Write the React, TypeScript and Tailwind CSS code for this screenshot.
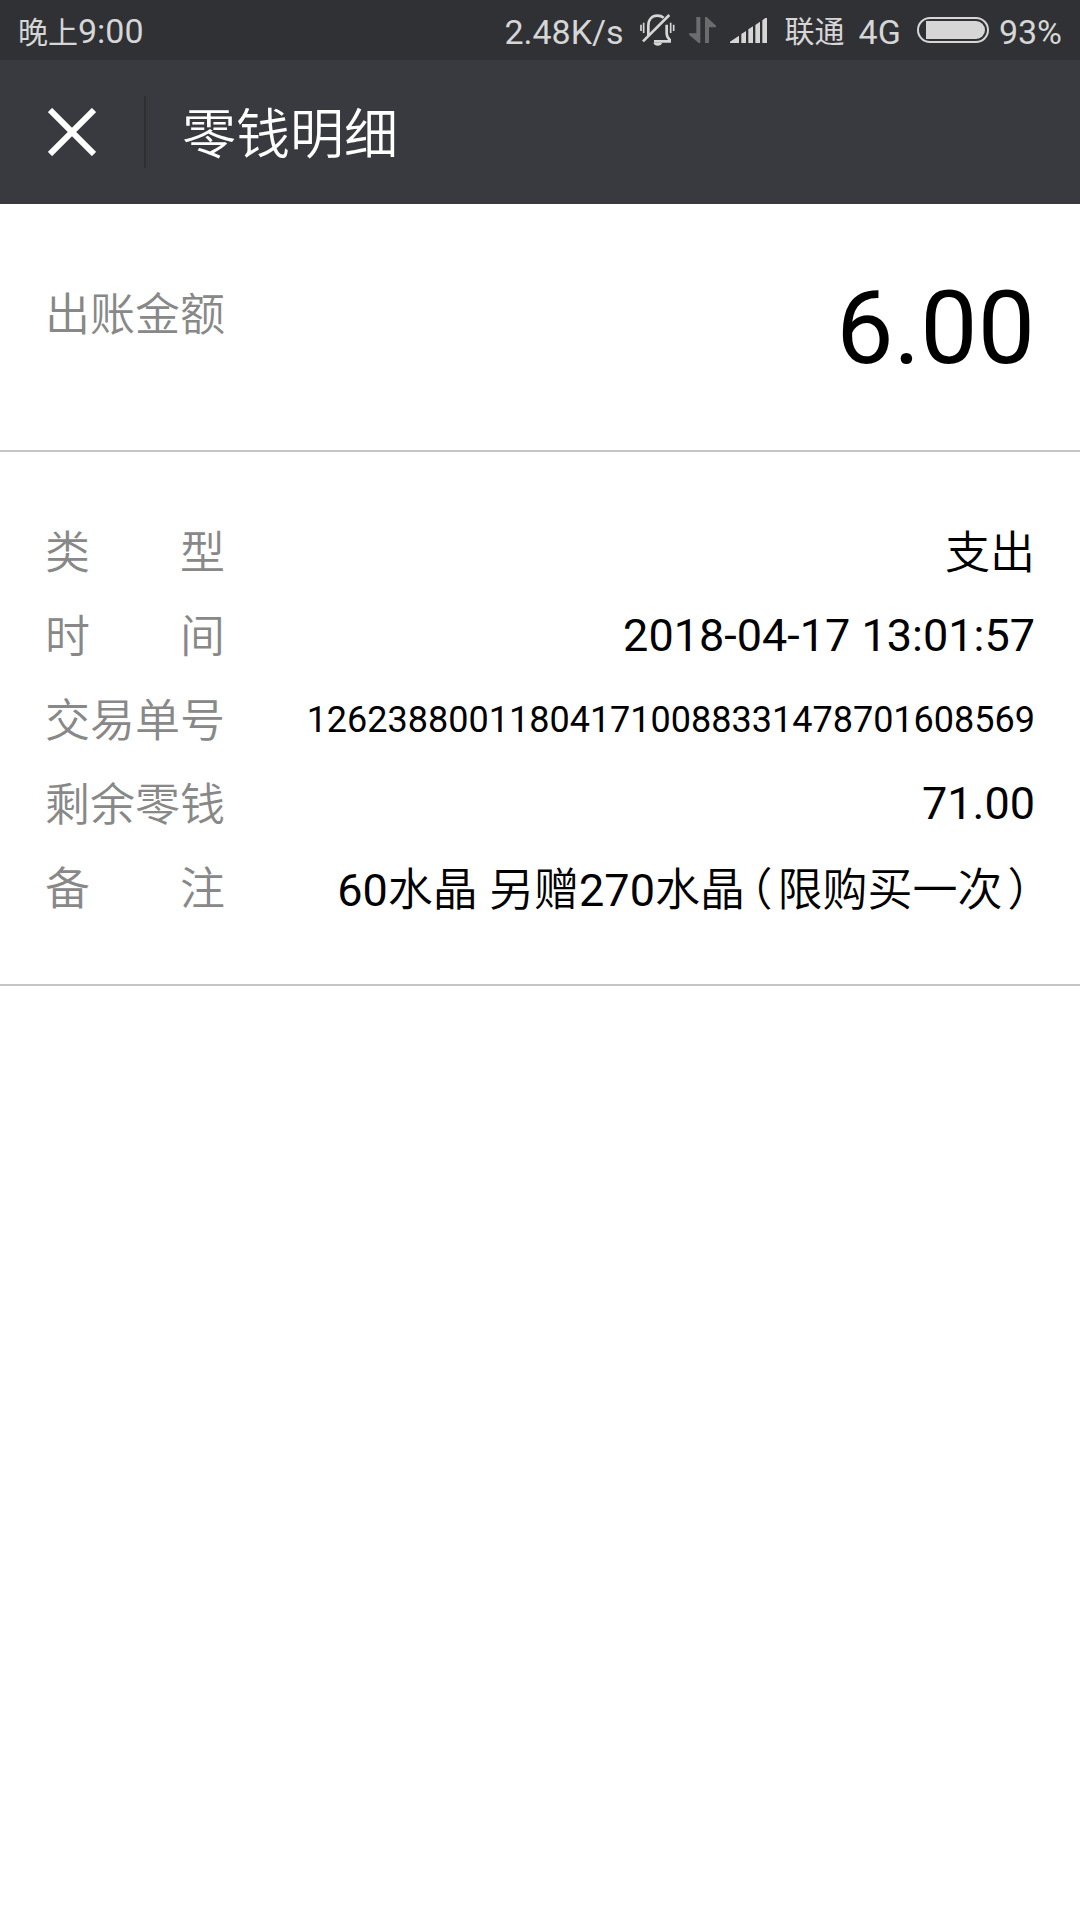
import type { ReactNode } from 'react';

type Row = {
  label: string;
  value: ReactNode;
  valueClass?: string;
};

const rows: Row[] = [
  { label: '类型', value: <Hanzi>支出</Hanzi>, valueClass: 'pt-1' },
  { label: '时间', value: '2018-04-17 13:01:57' },
  { label: '交易单号', value: '126238800118041710088331478701608569', valueClass: 'text-[36px]' },
  { label: '剩余零钱', value: '71.00' },
  { label: '备注', value: <Note />, valueClass: 'pt-[6px]' },
];

function Hanzi({ children }: { children: ReactNode }) {
  return <span className="font-[350]">{children}</span>;
}

// half-width alternates keep the brackets close to the words
function Bracket({ children }: { children: ReactNode }) {
  return <span className="mx-[5px] font-[350] [font-feature-settings:'halt']">{children}</span>;
}

function Note() {
  return (
    <>
      60<Hanzi>水晶</Hanzi> <Hanzi>另赠</Hanzi>270<Hanzi>水晶</Hanzi>
      <Bracket>（</Bracket>
      <Hanzi>限购买一次</Hanzi>
      <Bracket>）</Bracket>
    </>
  );
}

function MutedBellIcon() {
  return (
    <svg viewBox="0 0 105 96" className="h-8 w-[35px]" fill="none" stroke="currentColor" strokeWidth="8" aria-hidden="true">
      <path d="M25 66V35C25 16 36 5 52 5c8 0 14 2 19 6" />
      <path d="M80 32v26c0 9 3 14 9 19v5H42" />
      <path d="M9 82 88 3" />
      <path d="M3 32v19M11 26v31M92 26v31M101 32v19" strokeWidth="5" />
      <path d="M40 86h27c-2 6-7 9-13.500 9S42 92 40 86z" fill="currentColor" stroke="none" />
    </svg>
  );
}

function DataArrowsIcon() {
  return (
    <svg viewBox="0 0 81 78" className="h-[26px] w-[27px] text-[#6b6c6e]" fill="currentColor" aria-hidden="true">
      <path d="M22 0h12v78h-5L0 53v-4h22z" />
      <path d="M48 0h5l28 26v5H60v47H48z" />
    </svg>
  );
}

function SignalIcon() {
  return (
    <svg viewBox="0 0 111 75" className="h-[25px] w-[37px]" fill="currentColor" aria-hidden="true">
      <path d="M0 75v-4l27-18v22zM34 75V48l14-9v36zM55 75V34l14-9v50zM76 75V21l14-10v64zM97 75V7l9-7h5v75z" />
    </svg>
  );
}

function BatteryIcon() {
  return (
    <svg viewBox="0 0 72 26" className="h-[26px] w-[72px]" aria-hidden="true">
      <rect x="1" y="1" width="70" height="24" rx="12" fill="none" stroke="currentColor" strokeWidth="2" />
      <path d="M9 4h50a9 9 0 0 1 0 18H9z" fill="currentColor" />
    </svg>
  );
}

function StatusBar() {
  return (
    <div className="flex h-[60px] items-center justify-between bg-[#303135] px-[18px] text-[34px] leading-[48px] text-[#d6d6d6]">
      <span className="pt-1"><span className="text-[30px]">晚上</span>9:00</span>
      <div className="flex items-center">
        <span className="pt-1">2.48K/s</span>
        <span className="ml-4"><MutedBellIcon /></span>
        <span className="ml-[14px]"><DataArrowsIcon /></span>
        <span className="ml-[14px]"><SignalIcon /></span>
        <span className="ml-[18px] pt-1 text-[30px]">联通</span>
        <span className="ml-[14px] pt-1">4G</span>
        <span className="ml-4"><BatteryIcon /></span>
        <span className="ml-[10px] pt-1">93%</span>
      </div>
    </div>
  );
}

export default function App() {
  return (
    <div className="min-h-screen bg-white font-['Roboto','Noto_Sans_CJK_SC',sans-serif] text-black">
      <StatusBar />

      <header className="flex h-36 items-center bg-[#393a3f] text-white">
        <button type="button" aria-label="关闭" className="flex h-[72px] w-36 items-center justify-center">
          <svg viewBox="0 0 48 48" className="size-12" stroke="currentColor" strokeWidth="6" aria-hidden="true">
            <path d="M2 2l44 44M46 2L2 46" />
          </svg>
        </button>
        <div className="h-[72px] w-[2px] bg-[#2e2f33]" />
        <h1 className="ml-9 pt-2 text-[54px] leading-[72px] font-[350]">零钱明细</h1>
      </header>

      <main>
        <dl className="flex items-start justify-between border-b-2 border-[#c6c6c6] px-[45px] pt-[65px] pb-[63px] text-[45px]">
          <dt className="leading-[94px] font-[350] text-[#888]">出账金额</dt>
          <dd className="text-[102px] leading-[118px]">6.00</dd>
        </dl>

        <dl className="border-b-2 border-[#c6c6c6] px-[45px] pt-[58px] pb-[54px] text-[45px] leading-[60px]">
          {rows.map((row) => (
            <div key={row.label} className="flex h-[84px] items-center justify-between">
              {/* every label spans four characters */}
              <dt className="flex w-[180px] justify-between pt-1 font-[350] text-[#888]">
                {[...row.label].map((char) => (
                  <span key={char}>{char}</span>
                ))}
              </dt>
              <dd className={row.valueClass}>{row.value}</dd>
            </div>
          ))}
        </dl>
      </main>
    </div>
  );
}
